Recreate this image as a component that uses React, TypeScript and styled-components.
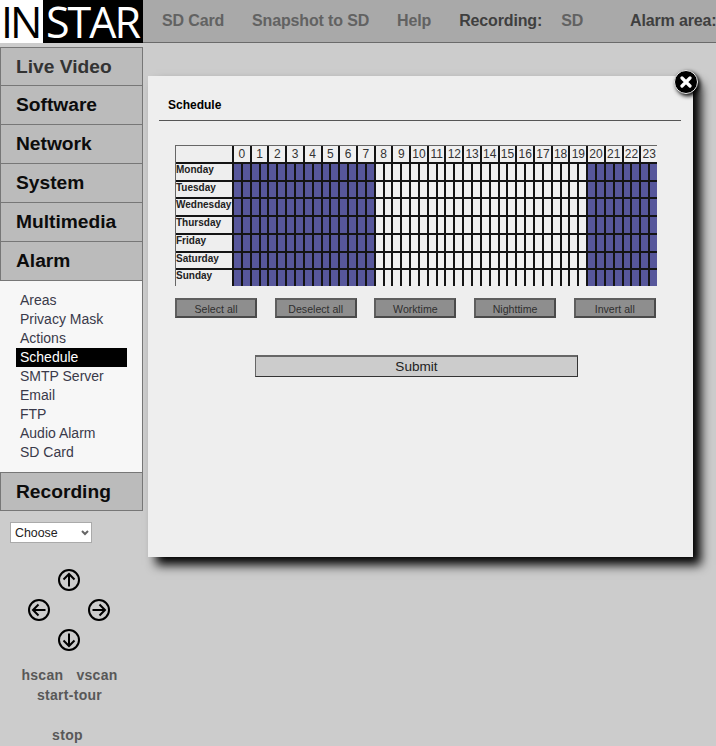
import React from 'react';
import styled, { createGlobalStyle } from 'styled-components';

const GlobalStyle = createGlobalStyle`
  html, body {
    margin: 0;
    padding: 0;
    height: 100%;
    background: #cccccc;
    overflow: hidden;
    font-family: "Liberation Sans", Arial, sans-serif;
  }
`;

const Page = styled.div`
  position: relative;
  width: 716px;
  height: 746px;
  overflow: hidden;
`;

const Header = styled.header`
  display: flex;
  align-items: center;
  height: 43px;
  box-sizing: border-box;
  background: #a9a9a9;
  border-bottom: 1px solid #6a6a6a;
  white-space: nowrap;
`;

const Logo = styled.div`
  display: flex;
  width: 143px;
  height: 43px;
  flex: none;
  background: #000;
  color: #fff;
  font-family: "Open Sans", sans-serif;
  font-weight: 400;
  font-size: 43px;
  line-height: 43px;
`;

const LogoIn = styled.span`
  width: 43px;
  padding-left: 1px;
  box-sizing: border-box;
  background: #fff;
  color: #000;
  letter-spacing: -3px;
`;

const LogoStar = styled.span`
  letter-spacing: -2px;
  padding-left: 3px;
`;

const NavLink = styled.span<{ $dark?: boolean; $gap?: number }>`
  margin-left: ${({ $gap }) => $gap ?? 28}px;
  font-size: 16px;
  font-weight: bold;
  letter-spacing: -0.15px;
  color: ${({ $dark }) => ($dark ? '#3f3f3f' : '#626262')};
`;

const Sidebar = styled.aside`
  width: 143px;
  margin-top: 4px;
  box-sizing: border-box;
`;

const MenuTitle = styled.div<{ $dim?: boolean; $capped?: boolean }>`
  height: 39px;
  box-sizing: border-box;
  padding-left: 15px;
  background: #bbbbbb;
  border: 1px solid #777;
  border-top: ${({ $capped }) => ($capped ? '1px solid #777' : '0')};
  font-size: 19.2px;
  font-weight: bold;
  line-height: ${({ $capped }) => ($capped ? 37 : 38)}px;
  color: ${({ $dim }) => ($dim ? '#333' : '#0c0c0c')};
`;

const SubMenu = styled.ul`
  list-style: none;
  margin: 0;
  padding: 10px 15px 10px 16px;
  height: 191px;
  box-sizing: border-box;
  background: #f7f7f7;
  border-right: 1px solid #777;
`;

const SubItem = styled.li<{ $active?: boolean }>`
  height: 19px;
  padding-left: 4px;
  font-size: 14px;
  line-height: 19px;
  color: ${({ $active }) => ($active ? '#fff' : '#3a3a4a')};
  background: ${({ $active }) => ($active ? '#000' : 'transparent')};
`;

const PresetSelect = styled.select`
  display: block;
  width: 82px;
  height: 21px;
  margin: 11px 0 0 10px;
  padding: 0 0 0 4px;
  appearance: none;
  background: #fff url("data:image/svg+xml,%3Csvg xmlns='http://www.w3.org/2000/svg' width='8' height='6'%3E%3Cpath d='M1 1l3 3 3-3' fill='none' stroke='%23666' stroke-width='2'/%3E%3C/svg%3E") no-repeat 70px 7px;
  border: 1px solid #aaa;
  border-radius: 0;
  font-family: inherit;
  font-size: 12.4px;
  color: #222;
`;

const Pad = styled.div`
  display: grid;
  grid-template-columns: repeat(3, 30px);
  grid-auto-rows: 30px;
  place-items: center;
  width: 90px;
  margin: 22px 0 0 24px;
`;

const PadCell = styled.span<{ $col: number; $row: number }>`
  grid-column: ${({ $col }) => $col};
  grid-row: ${({ $row }) => $row};
  display: flex;
`;

const PtzLinks = styled.div`
  width: 139px;
  margin-top: 6px;
  text-align: center;
  font-size: 14px;
  font-weight: bold;
  line-height: 20px;
  letter-spacing: 0.3px;
  color: #585858;
`;

const PtzRow = styled.div<{ $gap?: number; $shift?: number }>`
  display: flex;
  justify-content: center;
  gap: 13px;
  margin-top: ${({ $gap }) => $gap ?? 0}px;
  padding-right: ${({ $shift }) => $shift ?? 0}px;
`;

const Modal = styled.section`
  position: absolute;
  left: 148px;
  top: 76px;
  width: 545px;
  height: 481px;
  box-sizing: border-box;
  padding: 0 12px 0 11px;
  background: #eeeeee;
  box-shadow: 8px 8px 10px #000;
`;

const CloseButton = styled.button`
  position: absolute;
  top: -6px;
  right: -5px;
  display: flex;
  align-items: center;
  justify-content: center;
  width: 24px;
  height: 24px;
  padding: 0;
  background: #000;
  border: 1px solid #eee;
  border-radius: 50%;
  box-shadow: 2px 2px 4px #000;
`;

const ModalTitle = styled.h2`
  margin: 0;
  height: 45px;
  box-sizing: border-box;
  padding: 22px 0 0 9px;
  border-bottom: 1px solid #555;
  font-size: 12px;
  line-height: 14px;
  color: #000;
`;

const Content = styled.div`
  padding: 24px 0 0 16px;
`;

const ScheduleGrid = styled.div`
  display: grid;
  grid-template-columns: 56px repeat(48, 1fr);
  grid-template-rows: repeat(8, 1fr);
  gap: 2px;
  width: 482px;
  height: 141px;
  box-sizing: border-box;
  background: #141414;
  border-top: 1px solid #666;
  border-left: 1px solid #666;
`;

const HourCell = styled.div`
  grid-column: span 2;
  background: #f0f0f0;
  font-size: 12px;
  line-height: 16px;
  text-align: center;
  color: #333;
`;

const CornerCell = styled.div`
  background: #eeeeee;
`;

const DayCell = styled.div`
  background: #eeeeee;
  font-size: 10px;
  font-weight: bold;
  line-height: 12px;
  color: #222;
  white-space: nowrap;
`;

const SlotCell = styled.div<{ $on: boolean }>`
  background: ${({ $on }) => ($on ? '#57579b' : '#f0f0f0')};
`;

const ActionRow = styled.div`
  display: flex;
  justify-content: space-between;
  width: 480.8px;
  margin-top: 12px;
`;

const ActionButton = styled.button`
  width: 82px;
  height: 20px;
  padding: 1px 0 0;
  box-sizing: border-box;
  background: #8e8e8e;
  border: 2px solid #4a4a4a;
  border-top-color: #5e5e5e;
  border-left-color: #5e5e5e;
  font-family: inherit;
  font-size: 10.6px;
  color: #2f2f2f;
`;

const SubmitButton = styled.button`
  display: block;
  width: 323px;
  height: 22px;
  margin: 37px 0 0 80px;
  padding: 0;
  box-sizing: border-box;
  background: #cccccc;
  border: 1px solid #333;
  border-top: 2px solid #666;
  border-left-color: #666;
  font-family: inherit;
  font-size: 13.6px;
  color: #222;
`;

const PadArrow = ({ angle }: { angle: number }) => (
  <svg width="24" height="24" viewBox="0 0 24 24" fill="none" stroke="#000" strokeWidth="2">
    <circle cx="12" cy="12" r="10" />
    <path d="M12 18.5V6M6.5 11.5 12 6l5.5 5.5" transform={`rotate(${angle} 12 12)`} />
  </svg>
);

const groups = ['Live Video', 'Software', 'Network', 'System', 'Multimedia', 'Alarm'];
const alarmItems = ['Areas', 'Privacy Mask', 'Actions', 'Schedule', 'SMTP Server', 'Email', 'FTP', 'Audio Alarm', 'SD Card'];
const days = ['Monday', 'Tuesday', 'Wednesday', 'Thursday', 'Friday', 'Saturday', 'Sunday'];
const hours = Array.from({ length: 24 }, (_, i) => i);
const slots = Array.from({ length: 48 }, (_, i) => i);

const isNightSlot = (slot: number) => slot < 16 || slot >= 40;

const App = () => {
  return (
    <Page>
      <GlobalStyle />
      <Header>
        <Logo>
          <LogoIn>IN</LogoIn>
          <LogoStar>STAR</LogoStar>
        </Logo>
        <NavLink $gap={19}>SD Card</NavLink>
        <NavLink>Snapshot to SD</NavLink>
        <NavLink>Help</NavLink>
        <NavLink $dark>Recording:</NavLink>
        <NavLink $gap={19}>SD</NavLink>
        <NavLink $dark $gap={47}>Alarm area:</NavLink>
      </Header>

      <Sidebar>
        {groups.map((g, i) => (
          <MenuTitle key={g} $dim={i === 0} $capped={i === 0}>{g}</MenuTitle>
        ))}
        <SubMenu>
          {alarmItems.map((item) => (
            <SubItem key={item} $active={item === 'Schedule'}>{item}</SubItem>
          ))}
        </SubMenu>
        <MenuTitle $capped>Recording</MenuTitle>
        <PresetSelect defaultValue="choose">
          <option value="choose">Choose</option>
        </PresetSelect>
        <Pad>
          <PadCell $col={2} $row={1}><PadArrow angle={0} /></PadCell>
          <PadCell $col={1} $row={2}><PadArrow angle={270} /></PadCell>
          <PadCell $col={3} $row={2}><PadArrow angle={90} /></PadCell>
          <PadCell $col={2} $row={3}><PadArrow angle={180} /></PadCell>
        </Pad>
        <PtzLinks>
          <PtzRow $gap={10}><span>hscan</span><span>vscan</span></PtzRow>
          <PtzRow><span>start-tour</span></PtzRow>
          <PtzRow $gap={20} $shift={4}><span>stop</span></PtzRow>
        </PtzLinks>
      </Sidebar>

      <Modal>
        <CloseButton aria-label="Close">
          <svg width="12" height="12" viewBox="0 0 12 12">
            <path d="M2 2l8 8M10 2l-8 8" stroke="#fff" strokeWidth="3.2" strokeLinecap="round" />
          </svg>
        </CloseButton>
        <ModalTitle>Schedule</ModalTitle>
        <Content>
          <ScheduleGrid>
            <CornerCell />
            {hours.map((h) => <HourCell key={h}>{h}</HourCell>)}
            {days.map((d) => (
              <React.Fragment key={d}>
                <DayCell>{d}</DayCell>
                {slots.map((s) => <SlotCell key={s} $on={isNightSlot(s)} />)}
              </React.Fragment>
            ))}
          </ScheduleGrid>
          <ActionRow>
            <ActionButton>Select all</ActionButton>
            <ActionButton>Deselect all</ActionButton>
            <ActionButton>Worktime</ActionButton>
            <ActionButton>Nighttime</ActionButton>
            <ActionButton>Invert all</ActionButton>
          </ActionRow>
          <SubmitButton>Submit</SubmitButton>
        </Content>
      </Modal>
    </Page>
  );
};

export default App;
